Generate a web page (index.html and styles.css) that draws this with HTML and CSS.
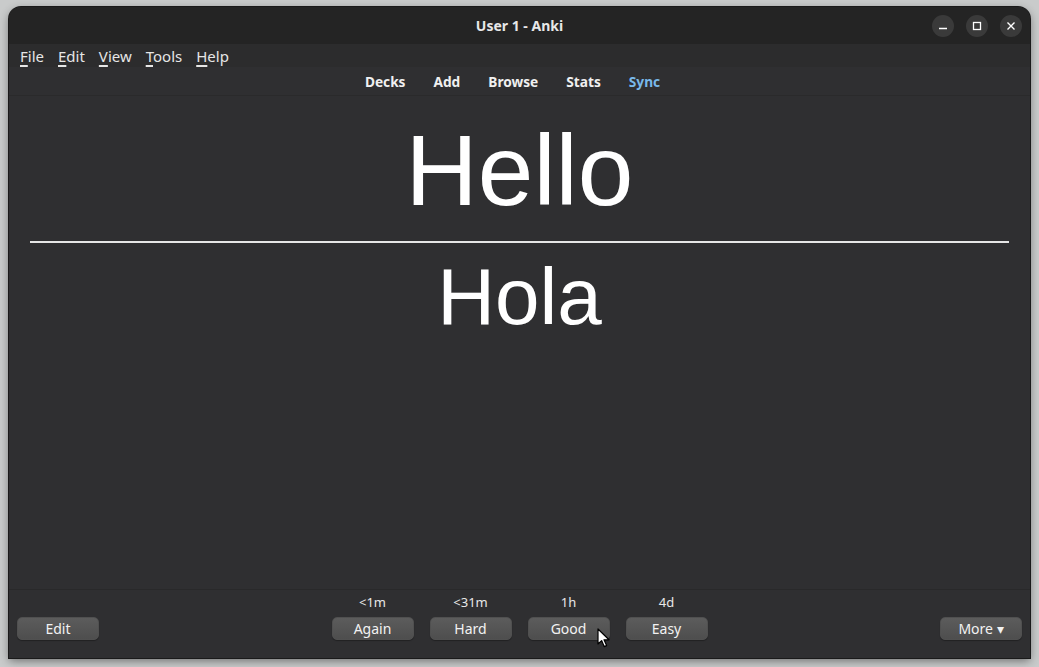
FILE: index.html
```html
<!DOCTYPE html>
<html>
<head>
<meta charset="utf-8">
<link rel="stylesheet" href="styles.css">
</head>
<body>
<div class="window">
  <div class="titlebar">
    <div class="title">User 1 - Anki</div>
    <div class="controls">
      <span class="ctl"><svg width="12" height="12" viewBox="0 0 12 12"><path d="M2 8.5h8" stroke="#fff" stroke-width="1.4"/></svg></span>
      <span class="ctl"><svg width="12" height="12" viewBox="0 0 12 12"><rect x="2.5" y="2.5" width="7" height="7" fill="none" stroke="#fff" stroke-width="1.3"/></svg></span>
      <span class="ctl"><svg width="12" height="12" viewBox="0 0 12 12"><path d="M2.5 2.5l7 7M9.5 2.5l-7 7" stroke="#fff" stroke-width="1.4"/></svg></span>
    </div>
  </div>
  <div class="menubar">
    <span class="menu"><u>F</u>ile</span>
    <span class="menu"><u>E</u>dit</span>
    <span class="menu"><u>V</u>iew</span>
    <span class="menu"><u>T</u>ools</span>
    <span class="menu"><u>H</u>elp</span>
  </div>
  <div class="toolbar">
    <span class="tb">Decks</span>
    <span class="tb">Add</span>
    <span class="tb">Browse</span>
    <span class="tb">Stats</span>
    <span class="tb sync">Sync</span>
  </div>
  <div class="card">
    <div class="front">Hello</div>
    <hr class="answer">
    <div class="back">Hola</div>
  </div>
  <div class="bottombar">
    <div class="side"><button class="btn">Edit</button></div>
    <div class="answers">
      <div class="ans"><span class="time">&lt;1m</span><button class="btn">Again</button></div>
      <div class="ans"><span class="time">&lt;31m</span><button class="btn">Hard</button></div>
      <div class="ans"><span class="time">1h</span><button class="btn">Good</button></div>
      <div class="ans"><span class="time">4d</span><button class="btn">Easy</button></div>
    </div>
    <div class="side right"><button class="btn">More &#9662;</button></div>
  </div>
  <svg class="cursor" width="14" height="20" viewBox="0 0 14 20"><path d="M1 1v15l3.6-3.4 2.6 6 2.4-1-2.6-5.8H12z" fill="#fff" stroke="#000" stroke-width="1.2" stroke-linejoin="round"/></svg>
</div>
</body>
</html>
```
FILE: styles.css
```css
html, body {
  margin: 0;
  padding: 0;
}
body {
  background: #c9cbcb;
  padding: 7px 9px 9px 9px;
  width: 1021px;
  height: 651px;
  font-family: "Noto Sans", "Open Sans", sans-serif;
}
.window {
  position: relative;
  width: 1021px;
  height: 651px;
  background: #2f2f31;
  border-radius: 12px 12px 0 0;
  box-shadow: 0 0 0 1px #1a1a1a, 0 3px 10px rgba(0,0,0,0.45);
  display: flex;
  flex-direction: column;
  overflow: hidden;
}
.titlebar {
  height: 37px;
  flex-shrink: 0;
  background: #242424;
  display: flex;
  align-items: center;
  justify-content: center;
  position: relative;
}
.title {
  color: #e8e8e8;
  font-weight: 700;
  font-size: 14px;
}
.controls {
  position: absolute;
  right: 8px;
  top: 8px;
  display: flex;
  gap: 12px;
}
.ctl {
  width: 22px;
  height: 22px;
  border-radius: 50%;
  background: #3a3a3a;
  display: flex;
  align-items: center;
  justify-content: center;
}
.menubar {
  height: 23px;
  flex-shrink: 0;
  background: #2c2c2d;
  display: flex;
  align-items: center;
  padding-left: 11px;
}
.menu {
  color: #e6e6e6;
  font-size: 15px;
  margin-right: 14px;
}
.menu u {
  text-decoration-thickness: 2px;
  text-underline-offset: 3px;
}
.toolbar {
  height: 28px;
  flex-shrink: 0;
  background: #2f2f31;
  border-bottom: 1px solid #2a2a2b;
  display: flex;
  align-items: center;
  justify-content: center;
  gap: 28px;
  padding-right: 14px;
}
.tb {
  color: #f0f0f0;
  font-weight: 700;
  font-size: 13.7px;
}
.tb.sync {
  color: #79b9ea;
}
.card {
  flex: 1;
  background: #2f2f31;
  font-family: "Liberation Sans", Arial, sans-serif;
  color: #fff;
  text-align: center;
  padding: 18px 21px 0 21px;
}
.front {
  font-size: 100px;
  line-height: 112px;
}
.answer {
  margin: 15px 0 0 0;
  border: none;
  height: 2px;
  background: #e6e6e6;
}
.back {
  font-size: 80px;
  line-height: 108px;
}
.bottombar {
  box-sizing: border-box;
  height: 69px;
  flex-shrink: 0;
  border-top: 1px solid #29292a;
  background: #2f2f31;
  display: flex;
  align-items: flex-end;
  padding: 0 8px 18px 8px;
}
.side {
  width: 82px;
}
.side.right {
  margin-left: auto;
}
.answers {
  flex: 1;
  display: flex;
  justify-content: center;
  gap: 16px;
}
.ans {
  display: flex;
  flex-direction: column;
  align-items: center;
  gap: 8px;
}
.time {
  color: #e8e8e8;
  font-size: 13px;
  line-height: 14px;
}
.btn {
  width: 82px;
  height: 23px;
  border-radius: 5px;
  border: 1px solid #505050;
  background: linear-gradient(#5c5c5c, #4e4e4e);
  color: #f2f2f2;
  font-family: "Noto Sans", "Open Sans", sans-serif;
  font-size: 14px;
  padding: 0;
  box-shadow: 0 1px 1px rgba(0,0,0,0.3);
}
.cursor {
  position: absolute;
  left: 588px;
  top: 621px;
}
```
